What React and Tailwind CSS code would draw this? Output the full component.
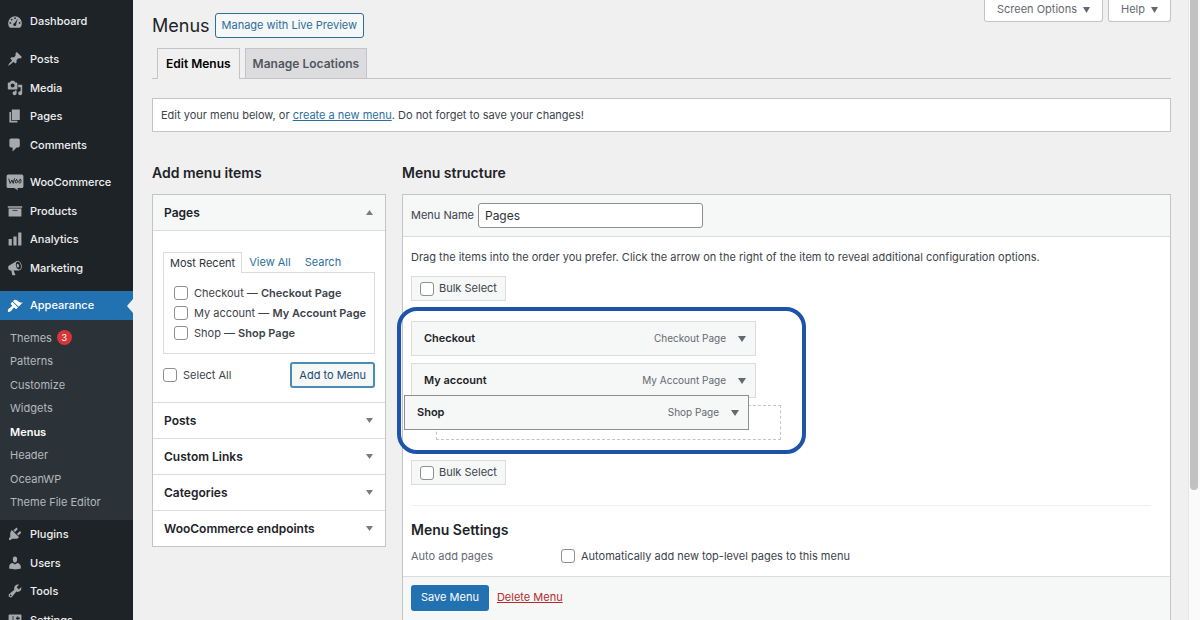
import React from "react";

const ICONS = {
  dashboard:
    "M3.6 17.2A8.6 8.6 0 1 1 16.4 17.2ZM10 4.2a1.1 1.1 0 1 0 0 2.2 1.1 1.1 0 0 0 0-2.2ZM5.9 5.9a1.1 1.1 0 1 0 0 2.2 1.1 1.1 0 0 0 0-2.2ZM4.2 10a1.1 1.1 0 1 0 0 2.2 1.1 1.1 0 0 0 0-2.2ZM15.8 10a1.1 1.1 0 1 0 0 2.2 1.1 1.1 0 0 0 0-2.2ZM13.4 5.6 9.6 11.300a1.900 1.900 0 1 0 1.900 1.200Z",
  posts:
    "M10.44 3.02l1.82-1.82 6.36 6.35-1.83 1.82c-1.05-.68-2.48-.57-3.41.36l-.75.75c-.92.93-1.04 2.35-.35 3.41l-1.83 1.82-2.41-2.41-2.8 2.79c-.42.42-3.38 2.71-3.8 2.29s1.86-3.39 2.28-3.81l2.79-2.79L4.1 9.36l1.83-1.82c1.05.69 2.48.57 3.4-.36l.75-.75c.93-.92 1.05-2.35.36-3.41z",
  media:
    "M13 11V4c0-.55-.45-1-1-1h-1.67L9 1H5L3.67 3H2c-.55 0-1 .45-1 1v7c0 .55.45 1 1 1h10c.55 0 1-.45 1-1zM7 4.5c1.38 0 2.5 1.12 2.5 2.5S8.38 9.5 7 9.5 4.5 8.38 4.5 7 5.62 4.5 7 4.5zM14 6h5v10.5c0 1.38-1.12 2.5-2.5 2.5S14 17.88 14 16.5s1.12-2.5 2.5-2.5c.17 0 .34.02.5.05V9h-3V6zm-4 8.05V13h2v3.5c0 1.38-1.12 2.5-2.5 2.5S7 17.88 7 16.5 8.12 14 9.5 14c.17 0 .34.02.5.05z",
  pages: "M6 15V2h10v13H6zm-1 1h8v2H3V5h2v11z",
  comments:
    "M5 2h9c1.1 0 2 .9 2 2v7c0 1.1-.9 2-2 2h-2l-5 5v-5H5c-1.1 0-2-.9-2-2V4c0-1.1.9-2 2-2z",
  products: "M19 4v2H1V4h18zM2 7h16v10H2V7zm11 3V9H7v1h6z",
  analytics: "M18 18V2h-4v16h4zm-6 0V7H8v11h4zm-6 0v-8H2v8h4z",
  marketing:
    "M18.15 5.94c.46 1.62.38 3.22-.02 4.48-.42 1.28-1.26 2.18-2.3 2.48-.16.06-.26.06-.4.06-.06.02-.12.02-.18.02-.06.02-.14.02-.22.02h-6.8l2.22 5.5c.02.14-.06.26-.14.34-.08.1-.24.16-.34.16H6.95c-.1 0-.26-.06-.34-.16-.08-.08-.16-.2-.14-.34l-1-5.5H4.25l-.02-.02c-.5.06-1.08-.18-1.54-.62s-.88-1.08-1.06-1.88c-.24-.8-.2-1.56-.02-2.2.18-.62.58-1.08 1.06-1.3l.02-.02 9-5.4c.1-.06.18-.1.24-.16.06-.04.14-.08.24-.12.16-.08.28-.12.5-.18 1.04-.3 2.24.1 3.22.98s1.84 2.24 2.26 3.86zm-2.58 5.98h-.02c.4-.1.74-.34 1.04-.7.58-.7.86-1.76.86-3.04 0-.64-.1-1.3-.28-1.98-.34-1.36-1.02-2.5-1.78-3.24s-1.68-1.1-2.46-.88c-.82.22-1.4.96-1.7 2-.32 1.04-.28 2.36.06 3.72.38 1.36 1 2.5 1.8 3.24.78.74 1.62 1.1 2.48.88zm-2.54-7.08c.22-.04.42-.02.62.04.38.16.76.48 1.02 1s.42 1.2.42 1.78c0 .3-.04.56-.12.8-.18.48-.44.84-.86.94-.34.1-.8-.06-1.14-.4s-.64-.86-.78-1.5c-.18-.62-.12-1.24.02-1.72s.48-.84.82-.94z",
  appearance:
    "M14.48 11.06L7.41 3.99l1.5-1.5c.5-.56 2.3-.47 3.51.32 1.21.8 1.43 1.28 2.91 2.1 1.18.64 2.45 1.26 4.45.85zm-.71.71L6.7 4.7 4.93 6.47c-.39.39-.39 1.02 0 1.41l1.06 1.06c.39.39.39 1.03 0 1.42-.6.6-1.43 1.11-2.21 1.69-.35.26-.7.53-1.01.84C1.43 14.23.4 16.08 1.4 17.07c.99 1 2.84-.03 4.18-1.36.31-.31.58-.66.85-1.02.57-.78 1.08-1.61 1.69-2.21.39-.39 1.02-.39 1.41 0l1.06 1.06c.39.39 1.02.39 1.41 0z",
  plugins:
    "M13.11 4.36L9.87 7.6 8 5.73l3.24-3.24c.35-.34 1.05-.2 1.56.32.52.51.66 1.21.31 1.55zm-8 1.77l.91-1.12 9.01 9.01-1.19.84c-.71.71-2.63 1.16-3.82 1.16H6.14L4.9 17.26c-.59.59-1.54.59-2.12 0-.59-.58-.59-1.53 0-2.12l1.24-1.24v-3.88c0-1.13.4-3.19 1.09-3.89zm7.26 3.97l3.24-3.24c.34-.35 1.04-.21 1.55.31.52.51.66 1.21.31 1.55l-3.24 3.25z",
  users:
    "M10 9.25c-2.27 0-2.73-3.44-2.73-3.44C7 4.02 7.82 2 9.97 2c2.16 0 2.98 2.02 2.71 3.81 0 0-.41 3.44-2.68 3.44zm0 2.57L12.72 10c2.39 0 4.52 2.33 4.52 4.53v2.49s-3.65 1.13-7.24 1.13c-3.65 0-7.24-1.13-7.24-1.13v-2.49c0-2.25 1.94-4.48 4.47-4.48z",
  tools:
    "M16.68 9.77c-1.34 1.34-3.3 1.67-4.95.99l-5.41 6.52c-.99.99-2.59.99-3.58 0s-.99-2.59 0-3.57l6.52-5.42c-.68-1.65-.35-3.61.99-4.95 1.28-1.28 3.12-1.62 4.72-1.06l-2.89 2.89 2.82 2.82 2.86-2.87c.53 1.58.18 3.39-1.08 4.65zM3.81 16.21c.4.39 1.04.39 1.43 0 .4-.4.4-1.04 0-1.43-.39-.4-1.03-.4-1.43 0-.39.39-.39 1.03 0 1.43z",
  settings:
    "M18 16V4c0-.55-.45-1-1-1H3c-.55 0-1 .45-1 1v12c0 .55.45 1 1 1h14c.55 0 1-.45 1-1zM8 11h1c.55 0 1 .45 1 1s-.45 1-1 1H8v1.5c0 .28-.22.5-.5.5s-.5-.22-.5-.5V13H6c-.55 0-1-.45-1-1s.45-1 1-1h1V5.5c0-.28.22-.5.5-.5s.5.22.5.5V11zm5-2h-1c-.55 0-1-.45-1-1s.45-1 1-1h1V5.5c0-.28.22-.5.5-.5s.5.22.5.5V7h1c.55 0 1 .45 1 1s-.45 1-1 1h-1v5.5c0 .28-.22.5-.5.5s-.5-.22-.5-.5V9z",
};

function MenuIcon({ name }) {
  if (name === "woo") {
    return (
      <svg viewBox="0 0 20 20" className="size-4 shrink-0 overflow-visible" aria-hidden="true">
        <path
          d="M1.5 0.5h17a2 2 0 0 1 2 2v13a2 2 0 0 1-2 2h-5.5l.6 2.800-4.500-2.800H1.500a2 2 0 0 1-2-2v-13a2 2 0 0 1 2-2Z"
          fill="#a7aaad"
        />
        <path
          d="M2.300 6.300 4 11.700 6.200 7.500l1.600 4.200L9.200 6M12 7c-2.300.600-2.400 4.300-.500 4.300s2.300-4.500.500-4.300ZM16.500 7c-2.300.600-2.400 4.300-.500 4.300s2.300-4.500.500-4.300Z"
          fill="none"
          stroke="#1d2327"
          strokeWidth="1.200"
          strokeLinejoin="round"
          strokeLinecap="round"
        />
      </svg>
    );
  }
  return (
    <svg viewBox="0 0 20 20" className="size-4 shrink-0" fill="currentColor" fillRule="evenodd" aria-hidden="true">
      <path d={ICONS[name]} />
    </svg>
  );
}

function NavItem({ icon, label }) {
  return (
    <a href="#" className="flex items-center gap-[7px] pl-[7px] text-[#a7aaad]">
      <MenuIcon name={icon} />
      <span className="text-[11px] font-medium text-[#f0f0f1]">{label}</span>
    </a>
  );
}

function Triangle({ up = false, className = "h-[5px] w-[7px]" }) {
  return (
    <svg viewBox="0 0 8 6" preserveAspectRatio="none" className={className + " shrink-0"} aria-hidden="true">
      <path d={up ? "M4 0 8 6H0Z" : "M0 0H8L4 6Z"} fill="currentColor" />
    </svg>
  );
}

function Check({ id }) {
  return (
    <input
      id={id}
      type="checkbox"
      className="size-[14px] shrink-0 appearance-none rounded-[3px] border border-[#8c8f94] bg-white checked:bg-[#2271b1]"
    />
  );
}

const SUBMENU = ["Themes", "Patterns", "Customize", "Widgets", "Menus", "Header", "OceanWP", "Theme File Editor"];

function Sidebar() {
  return (
    <nav aria-label="Admin menu" className="flex w-[133px] shrink-0 flex-col gap-[9px] overflow-hidden bg-[#1d2327] pt-[7px]">
      <div className="grid h-[29px] shrink-0">
        <NavItem icon="dashboard" label="Dashboard" />
      </div>
      <div className="grid h-[114px] shrink-0 auto-rows-fr">
        <NavItem icon="posts" label="Posts" />
        <NavItem icon="media" label="Media" />
        <NavItem icon="pages" label="Pages" />
        <NavItem icon="comments" label="Comments" />
      </div>
      <div className="grid h-[114px] shrink-0 auto-rows-fr">
        <NavItem icon="woo" label="WooCommerce" />
        <NavItem icon="products" label="Products" />
        <NavItem icon="analytics" label="Analytics" />
        <NavItem icon="marketing" label="Marketing" />
      </div>
      <div className="flex flex-col">
        <a href="#" className="relative flex h-[29px] items-center gap-[7px] bg-[#2271b1] pl-[7px] text-white">
          <MenuIcon name="appearance" />
          <span className="text-[11px] font-medium">Appearance</span>
          <svg viewBox="0 0 6 14" className="absolute top-2 right-0 h-[14px] w-[6px]" aria-hidden="true">
            <path d="M6 0 0 7l6 7Z" fill="#f0f0f1" />
          </svg>
        </a>
        <div className="bg-[#2c3338] py-[6px]">
          <ul className="grid h-[188px] auto-rows-fr text-[11px] text-[#b4b9be]">
            {SUBMENU.map((label) => (
              <li key={label} className="flex items-center gap-[5px] pl-[10px]">
                <a href="#" className={label === "Menus" ? "font-semibold text-white" : ""}>
                  {label}
                </a>
                {label === "Themes" && (
                  <span className="flex size-[15px] items-center justify-center rounded-full bg-[#d63638] text-[9px] text-white">
                    3
                  </span>
                )}
              </li>
            ))}
          </ul>
        </div>
        <div className="grid h-[114px] auto-rows-fr">
          <NavItem icon="plugins" label="Plugins" />
          <NavItem icon="users" label="Users" />
          <NavItem icon="tools" label="Tools" />
          <NavItem icon="settings" label="Settings" />
        </div>
      </div>
    </nav>
  );
}

const PAGES = [
  ["p1", "Checkout", "Checkout Page"],
  ["p2", "My account", "My Account Page"],
  ["p3", "Shop", "Shop Page"],
];

function AddItems() {
  return (
    <section className="w-[234px] shrink-0">
      <h2 className="text-sm leading-5 font-semibold text-[#1d2327]">Add menu items</h2>
      <div className="mt-[11px] border border-[#c3c4c7] bg-white">
        <button className="flex h-9 w-full items-center justify-between border-b border-[#dcdcde] bg-[#f6f7f7] pr-3 pl-[11px] text-xs font-semibold text-[#1d2327]">
          Pages
          <Triangle up className="h-[5px] w-[7px] text-[#787c82]" />
        </button>
        <div className="px-[10px] pt-[21px] pb-[14px]">
          <div className="flex text-[11px] text-[#2c6f9c]">
            <a href="#" className="-mb-px flex h-[21px] items-center border border-b-0 border-[#dcdcde] bg-white px-[6px] text-[#2c3338]">
              Most Recent
            </a>
            <a href="#" className="flex h-5 items-center px-[7px]">View All</a>
            <a href="#" className="flex h-5 items-center px-[7px]">Search</a>
          </div>
          <div className="flex h-[82px] flex-col justify-center gap-[4px] border border-[#dcdcde] px-[10px]">
            {PAGES.map(([id, title, page]) => (
              <label key={id} htmlFor={id} className="flex h-4 items-center gap-[6px] text-[11px] whitespace-nowrap text-[#3c434a]">
                <Check id={id} />
                <span>
                  {title} — <b className="font-semibold">{page}</b>
                </span>
              </label>
            ))}
          </div>
          <div className="mt-2 flex items-center justify-between">
            <label htmlFor="all" className="flex items-center gap-[6px] text-[11px] text-[#3c434a]">
              <Check id="all" />
              Select All
            </label>
            <button className="h-[26px] rounded-[3px] border-2 border-[#4a8cb4] bg-[#f6f7f7] px-[7px] text-[11px] text-[#1c4a70]">
              Add to Menu
            </button>
          </div>
        </div>
        {["Posts", "Custom Links", "Categories", "WooCommerce endpoints"].map((t) => (
          <button
            key={t}
            className="flex h-9 w-full items-center justify-between border-t border-[#dcdcde] pr-3 pl-[11px] text-xs font-semibold text-[#1d2327]"
          >
            {t}
            <Triangle className="h-[5px] w-[7px] text-[#787c82]" />
          </button>
        ))}
      </div>
    </section>
  );
}

function BulkSelect({ id }) {
  return (
    <label
      htmlFor={id}
      className="flex h-[25px] w-fit items-center gap-[5px] border border-[#dcdcde] bg-[#f6f7f7] px-2 text-[11px] text-[#3c434a]"
    >
      <Check id={id} />
      Bulk Select
    </label>
  );
}

function MenuEntry({ title, type, className }) {
  return (
    <li className={"flex h-[35px] w-[345px] items-center border bg-[#f6f7f7] pr-[9px] pl-3 " + className}>
      <span className="flex-1 text-[11px] font-semibold text-[#1d2327]">{title}</span>
      <span className="mr-3 text-[10px] text-[#646970]">{type}</span>
      <button aria-label={"Edit " + title} className="text-[#646970]">
        <Triangle className="block h-[6px] w-[8px]" />
      </button>
    </li>
  );
}

function Structure() {
  return (
    <section className="min-w-0 flex-1">
      <h2 className="text-sm leading-5 font-semibold text-[#1d2327]">Menu structure</h2>
      <div className="mt-[11px] border border-[#c3c4c7] bg-white text-[11px] text-[#3c434a]">
        <div className="flex h-[42px] items-center gap-1 border-b border-[#dcdcde] bg-[#f6f7f7] px-2">
          <label htmlFor="menu-name">Menu Name</label>
          <input
            id="menu-name"
            type="text"
            defaultValue="Pages"
            className="h-[25px] w-[225px] rounded-[3px] border border-[#8c8f94] bg-white px-[6px] text-xs text-[#2c3338]"
          />
        </div>
        <div className="px-2 pt-3 pb-[11px]">
          <p className="leading-4">
            Drag the items into the order you prefer. Click the arrow on the right of the item to reveal additional
            configuration options.
          </p>
          <div className="mt-[11px]">
            <BulkSelect id="bulk-top" />
          </div>
          <div className="relative my-5">
            <ul className="flex flex-col gap-[7px]">
              <MenuEntry title="Checkout" type="Checkout Page" className="border-[#dcdcde]" />
              <MenuEntry title="My account" type="My Account Page" className="border-[#dcdcde]" />
              <li className="ml-[25px] h-[35px] w-[345px] border border-dashed border-[#c3c4c7]" />
              <MenuEntry title="Shop" type="Shop Page" className="absolute top-[74px] -left-[7px] border-[#8c8f94]" />
            </ul>
            <div className="pointer-events-none absolute -top-[14px] -left-[14px] h-[147px] w-[409px] rounded-[20px] border-4 border-[#1d53a8]" />
          </div>
          <BulkSelect id="bulk-bottom" />
          <hr className="mt-5 mr-[11px] border-[#f0f0f1]" />
          <h3 className="mt-[14px] text-sm leading-5 font-semibold text-[#1d2327]">Menu Settings</h3>
          <div className="mt-2 flex items-center">
            <span className="w-[150px] text-[#646970]">Auto add pages</span>
            <label htmlFor="auto-add" className="flex items-center gap-[6px]">
              <Check id="auto-add" />
              Automatically add new top-level pages to this menu
            </label>
          </div>
        </div>
        <div className="flex items-center gap-2 border-t border-[#dcdcde] bg-[#f6f7f7] px-2 pt-2 pb-4">
          <button className="h-[26px] rounded-[3px] bg-[#2271b1] px-[10px] text-[11px] text-white">Save Menu</button>
          <a href="#" className="text-[#b32d2e] underline">
            Delete Menu
          </a>
        </div>
      </div>
    </section>
  );
}

function MetaButton({ children }) {
  return (
    <button className="flex h-[22px] items-center gap-[6px] rounded-b-[3px] border border-t-0 border-[#c3c4c7] bg-white px-3 pb-[2px] text-[11px] text-[#646970]">
      {children}
      <Triangle className="h-[6px] w-[7px]" />
    </button>
  );
}

export default function App() {
  return (
    <div className="flex h-screen overflow-hidden bg-[#f0f0f1] font-['Inter','Liberation_Sans',sans-serif]">
      <Sidebar />
      <main className="min-w-0 flex-1 overflow-hidden pr-[17px] pl-[19px]">
        <header className="flex items-start justify-between">
          <div className="flex items-center gap-[5px] pt-[13px]">
            <h1 className="text-lg leading-6 text-[#1d2327]">Menus</h1>
            <a
              href="#"
              className="flex h-[25px] items-center rounded-[3px] border border-[#2c6f9c] bg-[#f6f7f7] px-[6px] text-[11px] text-[#2c6f9c]"
            >
              Manage with Live Preview
            </a>
          </div>
          <div className="flex gap-[5px]">
            <MetaButton>Screen Options</MetaButton>
            <MetaButton>Help</MetaButton>
          </div>
        </header>
        <nav aria-label="Menu tabs" className="mt-[10px] flex h-[31px] gap-[5px] border-b border-[#c3c4c7] pl-[5px] text-xs font-semibold">
          <a href="#" className="flex h-[31px] items-center border border-b-0 border-[#c3c4c7] bg-[#f0f0f1] px-2 text-black">
            Edit Menus
          </a>
          <a href="#" className="flex items-center border border-b-0 border-[#c3c4c7] bg-[#dcdcde] px-[7px] text-[#50575e]">
            Manage Locations
          </a>
        </nav>
        <p className="mt-[19px] flex h-[34px] items-center border border-[#c3c4c7] bg-white px-2 text-[11px] text-[#3c434a]">
          <span>
            Edit your menu below, or{" "}
            <a href="#" className="text-[#2c6f9c] underline">
              create a new menu
            </a>
            . Do not forget to save your changes!
          </span>
        </p>
        <div className="mt-[31px] flex items-start gap-4">
          <AddItems />
          <Structure />
        </div>
      </main>
      <div className="w-3 shrink-0 border-l border-[#e8e8e8] bg-[#fafafa] px-px" aria-hidden="true">
        <div className="h-[79%] w-2 rounded-b-full bg-[#c1c1c1]" />
      </div>
    </div>
  );
}
